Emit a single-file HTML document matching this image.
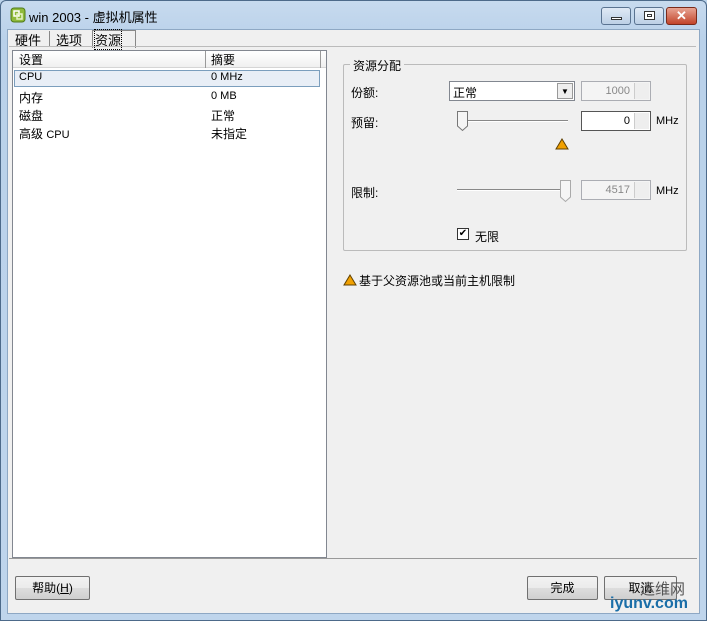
<!DOCTYPE html>
<html><head><meta charset="utf-8"><style>
*{box-sizing:border-box;margin:0;padding:0}
body{width:707px;height:621px;overflow:hidden;background:#bcd3ea;font-family:"Liberation Sans","Noto Sans CJK SC",sans-serif;font-size:12px;color:#000;position:relative}
.a{position:absolute}
.frame{left:0;top:0;width:707px;height:621px;background:linear-gradient(#c7daee,#b9d1ea 40px,#bfd5ec);border:1px solid #4d6a8a;border-radius:6px 6px 0 0}
.client{left:7px;top:29px;width:693px;height:585px;background:#f0f0f0;border:1px solid #8ea8c4}
.btn{border:1px solid #707070;background:linear-gradient(#f2f2f2,#ebebeb 50%,#dddddd 51%,#cfcfcf);text-align:center;line-height:22px;font-size:12px;border-radius:2px}
.tb{height:18px;top:7px;border:1px solid #5a7391;border-radius:3px;background:linear-gradient(#dfe9f5,#bdd0e6)}
.spin{border:1px solid #abadb3;background:#f4f4f4;color:#888;text-align:right;padding-right:20px;line-height:18px;font-size:11px}
.sb{position:absolute;right:1px;top:1px;width:15px;height:16px;border-left:1px solid #ccc;background:#eee}
</style></head><body>
<div class="a frame"></div>
<svg class="a" style="left:10px;top:7px" width="16" height="16"><rect x="1" y="1" width="14" height="14" rx="3" fill="#8fba3a" stroke="#4f7a1a"/><rect x="4" y="4" width="5" height="5" fill="none" stroke="#fff" stroke-width="1.5"/><rect x="7" y="7" width="5" height="5" fill="none" stroke="#e9f4c8" stroke-width="1.5"/></svg>
<div class="a" style="left:29px;top:7px;font-size:13px">win 2003 - 虚拟机属性</div>
<div class="a tb" style="left:601px;width:30px"><div class="a" style="left:9px;top:9px;width:11px;height:3px;background:#fff;border:1px solid #333"></div></div>
<div class="a tb" style="left:634px;width:30px"><div class="a" style="left:9px;top:3px;width:11px;height:9px;border:1px solid #333;background:#fff"><div style="margin:2px;height:3px;border:1px solid #333"></div></div></div>
<div class="a tb" style="left:666px;width:31px;background:linear-gradient(#e8a493,#c2442a);border-color:#7a2a1a;color:#fff;text-align:center;font-weight:bold;line-height:15px;font-size:13px">✕</div>
<div class="a client"></div>
<div class="a" style="left:15px;top:30px;font-size:13px">硬件</div>
<div class="a" style="left:49px;top:31px;width:1px;height:15px;background:#888"></div>
<div class="a" style="left:56px;top:30px;font-size:13px">选项</div>
<div class="a" style="left:92px;top:30px;width:44px;height:18px;border:1px solid #888;border-bottom:none;background:#f0f0f0"></div>
<div class="a" style="left:95px;top:30px;font-size:13px;outline:1px dotted #000">资源</div>
<div class="a" style="left:9px;top:46px;width:687px;height:1px;background:#bbb"></div>
<div class="a" style="left:12px;top:50px;width:315px;height:508px;background:#fff;border:1px solid #828790"></div>
<div class="a" style="left:13px;top:51px;width:313px;height:17px;background:linear-gradient(#fff,#f0f0f0);border-bottom:1px solid #d5d5d5"></div>
<div class="a" style="left:205px;top:51px;width:1px;height:17px;background:#999"></div>
<div class="a" style="left:320px;top:51px;width:1px;height:17px;background:#999"></div>
<div class="a" style="left:19px;top:51px;font-size:12px">设置</div>
<div class="a" style="left:211px;top:51px;font-size:12px">摘要</div>
<div class="a" style="left:14px;top:70px;width:306px;height:17px;background:#e8eef6;border:1px solid #7b9ebd"></div>
<div class="a" style="left:19px;top:71px;font-size:11px">CPU</div><div class="a" style="left:211px;top:71px;font-size:11px">0 MHz</div>
<div class="a" style="left:19px;top:89px">内存</div><div class="a" style="left:211px;top:90px;font-size:11px">0 MB</div>
<div class="a" style="left:19px;top:107px">磁盘</div><div class="a" style="left:211px;top:107px">正常</div>
<div class="a" style="left:19px;top:125px">高级 <span style="font-size:11px">CPU</span></div><div class="a" style="left:211px;top:125px">未指定</div>
<div class="a" style="left:343px;top:64px;width:344px;height:187px;border:1px solid #bbb;border-radius:2px"></div>
<div class="a" style="left:350px;top:57px;background:#f0f0f0;padding:0 3px">资源分配</div>
<div class="a" style="left:351px;top:84px">份额:</div>
<div class="a" style="left:449px;top:81px;width:126px;height:20px;border:1px solid #828790;background:#fff;padding:2px 3px">正常<div class="a" style="right:1px;top:1px;width:16px;height:16px;border:1px solid #999;background:#eee;font-size:8px;text-align:center;line-height:15px">▼</div></div>
<div class="a spin" style="left:581px;top:81px;width:70px;height:20px">1000<div class="sb"></div></div>
<div class="a" style="left:351px;top:114px">预留:</div>
<div class="a" style="left:462px;top:120px;width:106px;height:2px;background:#888;border-bottom:1px solid #fff"></div>
<svg class="a" style="left:456px;top:110px" width="13" height="22"><path d="M1.5 1.5H11.5V16L6.5 20.5L1.5 16Z" fill="#f5f5f5" stroke="#777"/></svg>
<div class="a spin" style="left:581px;top:111px;width:70px;height:20px;background:#fff;color:#000;border-color:#555">0<div class="sb"></div></div>
<div class="a" style="left:656px;top:115px;font-size:11px">MHz</div>
<svg class="a" style="left:555px;top:138px" width="14" height="12"><path d="M7 1L13 11H1Z" fill="#f0a000" stroke="#604000"/></svg>
<div class="a" style="left:351px;top:184px">限制:</div>
<div class="a" style="left:457px;top:189px;width:110px;height:2px;background:#888;border-bottom:1px solid #fff"></div>
<svg class="a" style="left:559px;top:179px" width="13" height="24"><path d="M1.5 1.5H11.5V18L6.5 22.5L1.5 18Z" fill="#f5f5f5" stroke="#aaa"/></svg>
<div class="a spin" style="left:581px;top:180px;width:70px;height:20px">4517<div class="sb"></div></div>
<div class="a" style="left:656px;top:185px;font-size:11px">MHz</div>
<div class="a" style="left:457px;top:228px;width:12px;height:12px;border:1px solid #333;background:#fff;font-size:10px;line-height:10px;text-align:center">✔</div>
<div class="a" style="left:475px;top:228px">无限</div>
<svg class="a" style="left:343px;top:274px" width="14" height="12"><path d="M7 1L13 11H1Z" fill="#f0a000" stroke="#604000"/></svg>
<div class="a" style="left:359px;top:272px">基于父资源池或当前主机限制</div>
<div class="a" style="left:9px;top:558px;width:688px;height:1px;background:#999"></div>
<div class="a btn" style="left:15px;top:576px;width:75px;height:24px">帮助(<u>H</u>)</div>
<div class="a btn" style="left:527px;top:576px;width:71px;height:24px">完成</div>
<div class="a btn" style="left:604px;top:576px;width:73px;height:24px">取消</div>
<div class="a" style="left:640px;top:578px;color:#555;font-size:15px">运维网</div>
<div class="a" style="left:610px;top:595px;color:#1a6ea8;font-size:16px;font-weight:bold">iyunv.com</div>
</body></html>
